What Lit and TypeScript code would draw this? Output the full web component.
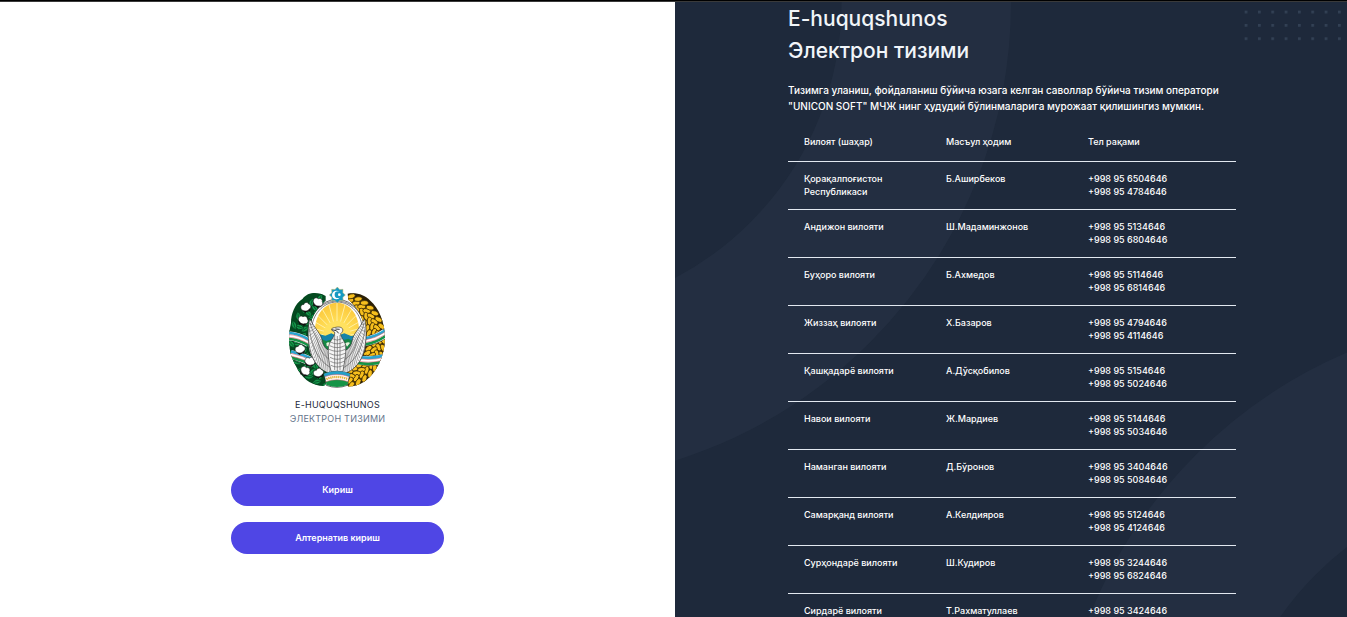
import { LitElement, html, svg, css } from "lit";
import { customElement } from "lit/decorators.js";

interface Contact {
  region: string;
  person: string;
  phones: string[];
}

const CONTACTS: Contact[] = [
  { region: "Қорақалпоғистон Республикаси", person: "Б.Аширбеков", phones: ["+998 95 6504646", "+998 95 4784646"] },
  { region: "Андижон вилояти", person: "Ш.Мадаминжонов", phones: ["+998 95 5134646", "+998 95 6804646"] },
  { region: "Буҳоро вилояти", person: "Б.Ахмедов", phones: ["+998 95 5114646", "+998 95 6814646"] },
  { region: "Жиззаҳ вилояти", person: "Х.Базаров", phones: ["+998 95 4794646", "+998 95 4114646"] },
  { region: "Қашқадарё вилояти", person: "А.Дўсқобилов", phones: ["+998 95 5154646", "+998 95 5024646"] },
  { region: "Навои вилояти", person: "Ж.Мардиев", phones: ["+998 95 5144646", "+998 95 5034646"] },
  { region: "Наманган вилояти", person: "Д.Бўронов", phones: ["+998 95 3404646", "+998 95 5084646"] },
  { region: "Самарқанд вилояти", person: "А.Келдияров", phones: ["+998 95 5124646", "+998 95 4124646"] },
  { region: "Сурҳондарё вилояти", person: "Ш.Кудиров", phones: ["+998 95 3244646", "+998 95 6824646"] },
  { region: "Сирдарё вилояти", person: "Т.Рахматуллаев", phones: ["+998 95 3424646"] },
];

const polar = (r: number, deg: number, cx = 180, cy = 182): [number, number] => {
  const a = (deg * Math.PI) / 180;
  return [cx + r * Math.cos(a), cy + r * Math.sin(a)];
};

/** National emblem: cotton and wheat wreath, rising sun, Humo bird. */
@customElement("state-emblem")
export class StateEmblem extends LitElement {
  static styles = css`
    :host {
      display: block;
    }
    svg {
      display: block;
      width: 97px;
      height: 101px;
    }
  `;

  private rays() {
    return Array.from({ length: 13 }, (_, i) => {
      const [x, y] = polar(100, 180 + i * 15, 180, 164);
      return svg`<line x1="180" y1="164" x2=${x} y2=${y} />`;
    });
  }

  private wheat() {
    const grains = [];
    for (let a = -76; a <= 82; a += 9) {
      for (const [r, tilt, shift] of [[98, -55, 0], [114, -55, 0], [126, -120, 4], [140, -120, 4]]) {
        const [x, y] = polar(r, a + shift);
        grains.push(svg`<ellipse cx=${x} cy=${y} rx="12" ry="7"
          transform="rotate(${a + tilt} ${x} ${y})" />`);
      }
    }
    return grains;
  }

  private leaves() {
    const out = [];
    for (let a = 104; a <= 254; a += 12) {
      for (const r of [102, 120, 137]) {
        const [x, y] = polar(r, a);
        out.push(svg`<path d="M-14 0Q0-15 14 0Q0 15-14 0M-9 0H9"
          transform="translate(${x} ${y}) rotate(${a + r * 3})" />`);
      }
    }
    return out;
  }

  private boll(x: number, y: number, turn: number) {
    return svg`<g transform="translate(${x} ${y}) rotate(${turn})">
      <path d="M-13 3Q0 20 14 3L6 13L0 5L-6 13Z" fill="#6b3f1d" stroke="#111" stroke-width="3" />
      <path d="M-14 2C-18-8-9-15-3-11C1-18 12-14 11-8C18-5 16 7 8 7C2 12-8 10-14 2Z" fill="#fff" stroke="#111" stroke-width="1.5" />
    </g>`;
  }

  private wing() {
    const feathers = [];
    for (let i = 0; i <= 18; i++) {
      const t = i / 18;
      const x1 = 95 + 70 * t * t;
      const y1 = 128 + 150 * Math.sin((t * Math.PI) / 2);
      const x2 = 108 + 52 * t;
      const y2 = 134 + 96 * t;
      feathers.push(svg`<path d="M${x1} ${y1}Q${(x1 + x2) / 2 - 3} ${(y1 + y2) / 2 + 6} ${x2} ${y2}" />`);
    }
    return svg`
      <path d="M98 116C90 150 92 200 108 235C122 262 142 277 168 284L172 258L160 214C146 208 138 196 136 184C132 160 116 150 98 116Z" fill="#f2f2f2" stroke="#222" stroke-width="2" />
      <path d="M100 128C102 150 118 165 124 190C130 216 146 232 166 244M97 145C100 175 110 205 122 225C136 246 150 258 168 266" fill="none" stroke="#444" stroke-width="1.8" />
      <g fill="none" stroke="#5c5c5c" stroke-width="1.6">${feathers}</g>`;
  }

  private star() {
    const pts = Array.from({ length: 16 }, (_, i) => polar(i % 2 ? 18 : 24, i * 22.5, 181, 45).join(",")).join(" ");
    return svg`<polygon points=${pts} fill="#169ac3" stroke="#c9b45c" stroke-width="1.5" />
      <circle cx="178" cy="45" r="13" fill="#fff" /><circle cx="183" cy="44" r="10" fill="#169ac3" />
      <circle cx="187" cy="44" r="4" fill="#fff" />`;
  }

  private ribbon(d: string) {
    return svg`<g fill="none">
      <path d=${d} stroke="#333" stroke-width="29" />
      <path d=${d} stroke="#fff" stroke-width="27" />
      <g transform="translate(0 -9)"><path d=${d} stroke="#2aa5d0" stroke-width="8" /></g>
      <g transform="translate(0 9)"><path d=${d} stroke="#159447" stroke-width="8" /></g>
      <g transform="translate(0 -4)"><path d=${d} stroke="#df5360" stroke-width="1.6" /></g>
      <g transform="translate(0 4)"><path d=${d} stroke="#df5360" stroke-width="1.6" /></g>
    </g>`;
  }

  render() {
    return html`<svg viewBox="36 21 291 303" role="img" aria-label="Ўзбекистон Республикаси Давлат герби">
      <defs>
        <radialGradient id="sun" cx="180" cy="164" r="98" gradientUnits="userSpaceOnUse">
          <stop offset="0" stop-color="#fff3a0" />
          <stop offset=".45" stop-color="#ffdc55" />
          <stop offset="1" stop-color="#fbc638" />
        </radialGradient>
        <clipPath id="disc"><path d="M117 180C103 116 138 68 180 68S257 116 243 180L228 230H132Z" /></clipPath>
        <clipPath id="wreath"><path d="M146 48C126 35 92 34 77 56C52 72 42 103 42 128C35 158 36 180 37 194C38 225 52 250 66 275C84 301 106 316 140 318L174 286C110 265 93 220 94 180C94 130 111 87 146 62ZM212 41C240 37 264 45 280 62C306 84 325 130 324 177C323 230 298 278 265 303C248 315 230 320 215 320L186 286C250 265 267 220 266 180C265 122 248 87 214 59Z" /></clipPath>
      </defs>
      <ellipse cx="180" cy="172" rx="90" ry="114" fill="#fff" stroke="#222" stroke-width="2" />
      <path d="M98 150C98 100 135 63 180 63S262 100 262 150M104 150C104 105 138 66 180 66S256 105 256 150" fill="none" stroke="#444" stroke-width="2" />
      <g clip-path="url(#disc)">
        <rect x="90" y="60" width="180" height="170" fill="url(#sun)" />
        <g stroke="#fff4b4" stroke-width="2.5">${this.rays()}</g>
        <circle cx="180" cy="164" r="41" fill="#ffe15f" />
        <path d="M100 174L128 163L145 167L163 160L180 168L202 160L222 168L260 164V230H100Z" fill="#1584a8" />
        <path d="M100 184L130 176L148 183L168 177L188 183L214 176L228 183L260 180V234H100Z" fill="#168845" />
        <path d="M148 190Q153 184 161 190L156 200L149 197ZM204 190Q215 184 219 189L210 200Z" fill="#e4f4da" />
        <path d="M140 208L158 215L166 240H140ZM198 215L222 208V240H196Z" fill="#1a9dc1" />
      </g>
      <g clip-path="url(#wreath)">
        <path d="M30 20H180V330H30Z" fill="#04491f" />
        <path d="M180 20H330V330H180Z" fill="#2b2006" />
        <g fill="#14994a" stroke="#063f1f" stroke-width="2">${this.leaves()}</g>
        <g fill="#f7bf1d" stroke="#3a2905" stroke-width="2.2">${this.wheat()}</g>
        ${this.ribbon("M34 168Q62 168 96 188")}
        ${this.ribbon("M42 224Q78 231 111 250")}
        ${this.ribbon("M264 184Q295 180 326 159")}
        ${this.ribbon("M232 236Q270 249 322 236")}
      </g>
      ${this.boll(122, 68, 25)} ${this.boll(87, 83, -20)} ${this.boll(78, 122, 15)}
      ${this.boll(70, 209, -20)} ${this.boll(98, 246, 10)} ${this.boll(84, 274, 35)} ${this.boll(125, 280, -20)}
      ${this.wing()}
      <g transform="translate(361 0) scale(-1 1)">${this.wing()}</g>
      <path d="M173 156C162 152 160 144 172 143C195 136 205 149 191 161C190 172 203 180 206 197C208 218 202 249 198 274H162C155 244 151 214 156 195C160 181 171 172 173 162Z" fill="#f5f5f5" stroke="#333" stroke-width="2" />
      <path d="M164 149L178 152L185 160M175 147L188 148" fill="none" stroke="#111" stroke-width="2.5" />
      <path d="M166 176Q180 185 195 176M161 186Q180 197 200 186M158 197Q180 209 204 197M156 208Q180 220 205 208M157 220Q180 232 204 220M159 232Q180 244 202 232M160 244Q180 255 201 244M162 256Q180 266 200 256M173 165V270M181 168V273M189 165V270" fill="none" stroke="#555" stroke-width="1.8" />
      <path d="M141 281Q180 267 219 281L211 316Q180 328 148 316Z" fill="#fff" stroke="#222" stroke-width="2" />
      <path d="M141 281Q180 267 219 281L217 290Q180 277 143 290Z" fill="#229fc8" />
      <path d="M146 305Q180 293 214 305L211 315Q180 327 149 315Z" fill="#159447" />
      <path d="M144 290Q180 277 216 290M146 305Q180 293 214 305" fill="none" stroke="#df5360" stroke-width="1.5" />
      <path d="M148 297Q180 285 212 297" fill="none" stroke="#e5af35" stroke-width="7" stroke-dasharray="4 2" />
      ${this.star()}
    </svg>`;
  }
}

@customElement("app-root")
export class AppRoot extends LitElement {
  static styles = css`
    :host {
      display: block;
      height: 100vh;
      overflow: hidden;
      box-sizing: border-box;
      border-top: 1px solid #000;
      font-family: Inter, "Noto Sans", sans-serif;
      color: #1e293b;
      background: #fff;
    }
    .layout {
      display: grid;
      grid-template-columns: 675fr 672fr;
      height: 100%;
      box-sizing: border-box;
      border-top: 1px solid #3a3a3a;
    }
    .sign-in {
      display: flex;
      flex-direction: column;
      align-items: center;
      padding: 285px 32px 0;
    }
    .brand {
      margin: 10px 0 48px;
      text-align: center;
      font-size: 9px;
      font-weight: 400;
      line-height: 14px;
      letter-spacing: 0.025em;
      text-transform: uppercase;
    }
    .brand span {
      display: block;
    }
    .brand .sub {
      color: #64748b;
    }
    .actions {
      display: grid;
      gap: 16px;
      width: 100%;
      max-width: 213px;
    }
    .actions button {
      height: 32px;
      border: 0;
      border-radius: 16px;
      background: #4f46e5;
      color: #fff;
      font: 600 9px/14px Inter, "Noto Sans", sans-serif;
      cursor: pointer;
    }
    .info {
      position: relative;
      overflow: hidden;
      display: flex;
      justify-content: center;
      padding: 1px 0 0 2px;
      background: #1e293b;
      color: #fff;
    }
    .rings,
    .dots {
      position: absolute;
      pointer-events: none;
      color: #334155;
    }
    .rings {
      inset: 0;
      width: 100%;
      height: 100%;
    }
    .dots {
      top: 0;
      right: -1px;
    }
    .content {
      position: relative;
      width: 100%;
      max-width: 448px;
    }
    h1 {
      margin: 0;
      font-size: 21px;
      font-weight: 500;
      line-height: 32px;
      color: #f1f5f9;
    }
    h1 span {
      display: block;
    }
    .lead {
      margin: 15px 0 9px;
      font-size: 10px;
      font-weight: 500;
      line-height: 16px;
    }
    table {
      width: 100%;
      border-collapse: separate;
      border-spacing: 0;
      table-layout: fixed;
      font-size: 9px;
      font-weight: 500;
      line-height: 13px;
    }
    th,
    td {
      box-sizing: border-box;
      padding: 10px 16px 11px;
      text-align: left;
      vertical-align: top;
      font-weight: 500;
      border-bottom: 1px solid #e2e8f0;
    }
    th {
      padding: 12px 16px 13px;
    }
    .col {
      width: 142px;
    }
    .phone {
      display: block;
      white-space: nowrap;
    }
  `;

  render() {
    return html`
      <main class="layout">
        <section class="sign-in">
          <state-emblem></state-emblem>
          <h2 class="brand"><span>E-huquqshunos</span><span class="sub">Электрон тизими</span></h2>
          <div class="actions">
            <button type="button">Кириш</button>
            <button type="button">Алтернатив кириш</button>
          </div>
        </section>
        <section class="info">
          <svg class="rings" viewBox="0 23 960 363" preserveAspectRatio="xMidYMin slice" aria-hidden="true">
            <g fill="none" stroke="currentColor" stroke-width="100" opacity=".25">
              <circle r="234" cx="196" cy="23" />
              <circle r="234" cx="790" cy="491" />
            </g>
          </svg>
          <svg class="dots" width="104" height="40" viewBox="0 0 156 60" aria-hidden="true">
            <defs>
              <pattern id="dot" x="1" y="13" width="20" height="20" patternUnits="userSpaceOnUse">
                <rect width="4" height="4" fill="currentColor" />
              </pattern>
            </defs>
            <rect width="156" height="60" fill="url(#dot)" />
          </svg>
          <div class="content">
            <h1><span>E-huquqshunos</span><span>Электрон тизими</span></h1>
            <p class="lead">
              Тизимга уланиш, фойдаланиш бўйича юзага келган саволлар бўйича тизим оператори "UNICON SOFT" МЧЖ нинг
              ҳудудий бўлинмаларига мурожаат қилишингиз мумкин.
            </p>
            <table>
              <colgroup><col class="col" /><col class="col" /><col /></colgroup>
              <thead>
                <tr>
                  <th scope="col">Вилоят (шаҳар)</th>
                  <th scope="col">Масъул ҳодим</th>
                  <th scope="col">Тел рақами</th>
                </tr>
              </thead>
              <tbody>
                ${CONTACTS.map(
                  (c) => html`<tr>
                    <td>${c.region}</td>
                    <td>${c.person}</td>
                    <td>${c.phones.map((p) => html`<span class="phone">${p}</span>`)}</td>
                  </tr>`
                )}
              </tbody>
            </table>
          </div>
        </section>
      </main>
    `;
  }
}
